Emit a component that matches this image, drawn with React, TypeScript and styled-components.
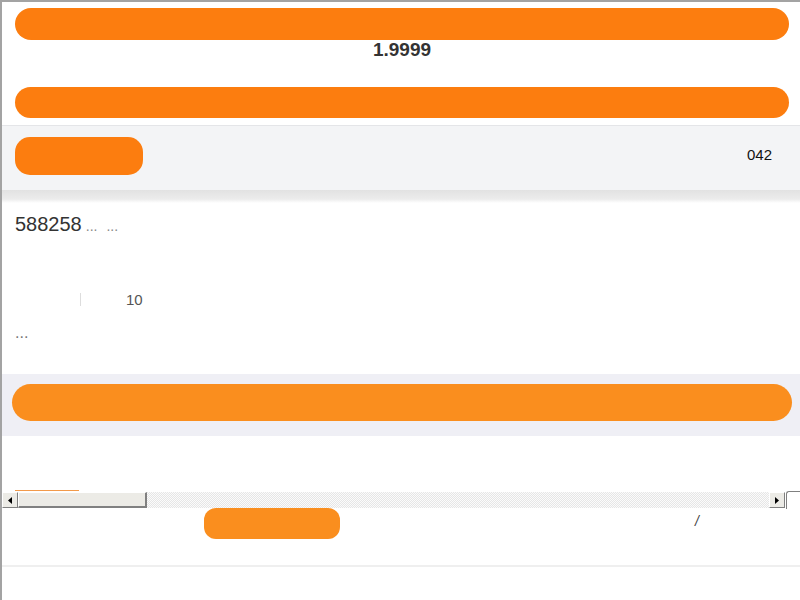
import React from "react";
import styled, { createGlobalStyle } from "styled-components";

const GlobalStyle = createGlobalStyle`
  html, body {
    margin: 0;
    padding: 0;
    background: #fff;
    font-family: "Liberation Sans", Arial, sans-serif;
  }
`;

const Page = styled.div`
  width: 800px;
  height: 600px;
  box-sizing: border-box;
  border-top: 2px solid #a3a3a3;
  border-left: 2px solid #a3a3a3;
  overflow: hidden;
  display: flex;
  flex-direction: column;
`;

const Header = styled.div`
  padding: 6px 11px 0 13px;
  display: flex;
  flex-direction: column;
`;

const Bar = styled.div<{ $tone?: string; $h?: number }>`
  height: ${p => p.$h ?? 32}px;
  border-radius: ${p => Math.round((p.$h ?? 32) / 2)}px;
  background: ${p => p.$tone ?? "#fc7d0f"};
`;

const Price = styled.div`
  height: 47px;
  box-sizing: border-box;
  text-align: center;
  font-weight: bold;
  font-size: 19px;
  line-height: 19px;
  color: #333;
`;

const Toolbar = styled.div`
  margin-top: 7px;
  height: 65px;
  box-sizing: border-box;
  border-top: 1px solid #e4e5e8;
  background: #f3f4f6;
  display: flex;
  align-items: center;
  justify-content: space-between;
  padding: 0 28px 4px 13px;
`;

const Shade = styled.div`
  height: 13px;
  background: linear-gradient(#e2e2e2, #ececec 70%, #fff);
`;

const Pill = styled.div<{ $w: number; $h: number; $tone?: string }>`
  width: ${p => p.$w}px;
  height: ${p => p.$h}px;
  border-radius: ${p => Math.round(p.$h / 2.6)}px;
  background: ${p => p.$tone ?? "#fc7d0f"};
`;

const Code = styled.span`
  font-size: 15px;
  color: #111;
  margin-bottom: 3px;
`;

const Body = styled.div`
  padding: 10px 0 0 13px;
  display: flex;
  flex-direction: column;
`;

const TitleRow = styled.div`
  display: flex;
  align-items: baseline;
  gap: 4px;
  height: 30px;
`;

const Big = styled.span`
  font-size: 20px;
  color: #333;
`;

const Dots = styled.span`
  font-size: 14px;
  color: #888;
  margin-right: 5px;
`;

const MetaRow = styled.div`
  margin-top: 46px;
  display: flex;
  align-items: center;
  height: 20px;
  font-size: 15px;
  color: #555;
`;

const Sep = styled.span`
  margin-left: 65px;
  width: 1px;
  height: 13px;
  background: #ddd;
`;

const Count = styled.span`
  margin-left: 45px;
`;

const More = styled.div`
  margin-top: 15px;
  font-size: 16px;
  color: #777;
`;

const Band = styled.div`
  margin-top: 32px;
  height: 62px;
  box-sizing: border-box;
  background: #efeff5;
  padding: 10px 8px 0 10px;
`;

const Foot = styled.div`
  margin-top: 54px;
  display: flex;
  flex-direction: column;
`;

const Underline = styled.div`
  margin-left: 13px;
  width: 64px;
  height: 1px;
  background: #f29a4a;
`;

const Scrollbar = styled.div`
  height: 16px;
  margin-top: 1px;
  margin-right: 15px;
  display: flex;
  position: relative;
  background-color: #f4f4f4;
  background-image: repeating-conic-gradient(#e6e6e6 0 25%, #fbfbfb 0 50%);
  background-size: 2px 2px;
`;

const ArrowBtn = styled.div`
  width: 16px;
  height: 16px;
  box-sizing: border-box;
  background: #ecebe6;
  border-top: 1px solid #fff;
  border-left: 1px solid #fff;
  border-right: 1px solid #808080;
  border-bottom: 1px solid #808080;
  display: flex;
  align-items: center;
  justify-content: center;
`;

const Thumb = styled.div`
  width: 129px;
  height: 16px;
  box-sizing: border-box;
  background: #ecebe6;
  border-top: 1px solid #fff;
  border-left: 1px solid #fff;
  border-right: 2px solid #808080;
  border-bottom: 2px solid #808080;
`;

const Track = styled.div`
  flex: 1;
`;

const Corner = styled.div`
  position: absolute;
  right: -15px;
  top: -1px;
  width: 13px;
  height: 17px;
  border-top: 1px solid #808080;
  border-left: 1px solid #808080;
  border-top-left-radius: 3px;
`;

const ActionRow = styled.div`
  height: 31px;
  display: flex;
  align-items: center;
  position: relative;
  padding-left: 202px;
`;

const Slash = styled.span`
  position: absolute;
  left: 693px;
  top: 5px;
  font-size: 14px;
  color: #444;
  font-style: italic;
`;

const Rule = styled.div`
  margin-top: 26px;
  height: 2px;
  background: #efefef;
`;

const Arrow = ({ dir }: { dir: "l" | "r" }) => (
  <svg width="4" height="7" viewBox="0 0 4 7">
    {dir === "l" ? <path d="M4 0 L0 3.5 L4 7 Z" fill="#000" /> : <path d="M0 0 L4 3.5 L0 7 Z" fill="#000" />}
  </svg>
);

export default function App() {
  return (
    <>
      <GlobalStyle />
      <Page>
        <Header>
          <Bar />
          <Price>1.9999</Price>
          <Bar $h={31} />
        </Header>
        <Toolbar>
          <Pill $w={128} $h={38} />
          <Code>042</Code>
        </Toolbar>
        <Shade />
        <Body>
          <TitleRow>
            <Big>588258</Big>
            <Dots>...</Dots>
            <Dots>...</Dots>
          </TitleRow>
          <MetaRow>
            <Sep />
            <Count>10</Count>
          </MetaRow>
          <More>...</More>
        </Body>
        <Band>
          <Bar $tone="#fa8e1e" $h={37} />
        </Band>
        <Foot>
          <Underline />
          <Scrollbar>
            <ArrowBtn>
              <Arrow dir="l" />
            </ArrowBtn>
            <Thumb />
            <Track />
            <ArrowBtn>
              <Arrow dir="r" />
            </ArrowBtn>
            <Corner />
          </Scrollbar>
          <ActionRow>
            <Pill $w={136} $h={31} $tone="#fa8e1e" />
            <Slash>/</Slash>
          </ActionRow>
          <Rule />
        </Foot>
      </Page>
    </>
  );
}
